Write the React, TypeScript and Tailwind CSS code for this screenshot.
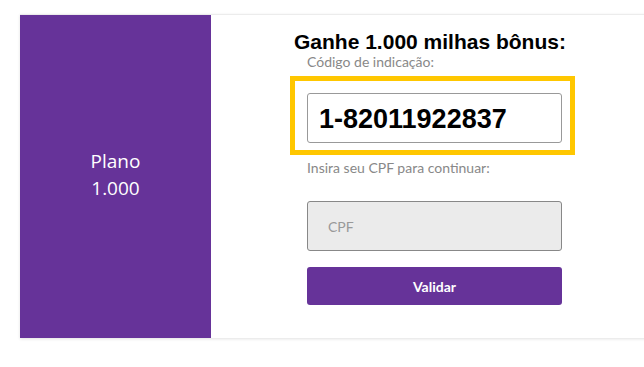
export default function App() {
  return (
    <div className="w-[644px] h-[367px] bg-white overflow-hidden" style={{ fontFamily: "Lato, 'Open Sans', sans-serif" }}>
      <div className="ml-[20px] mt-[14px] w-[640px] h-[324px] flex border-t border-[#ececec] shadow-[0_1px_3px_rgba(0,0,0,0.12)] bg-white">
        <div className="w-[191px] bg-[#663399] flex flex-col items-center justify-center text-white text-[19px] leading-[27px] pb-[3px]" style={{ fontFamily: "'Open Sans', Lato, sans-serif" }}>
          <span>Plano</span>
          <span>1.000</span>
        </div>
        <div className="flex-1 flex flex-col pl-[79px]">
          <div className="mt-[14px] ml-[4px] text-[21px] leading-[26px] font-bold text-black" style={{ fontFamily: "'Liberation Sans', Arial, sans-serif" }}>
            Ganhe 1.000 milhas bônus:
          </div>
          <div className="ml-[17px] -mt-[1px] text-[14px] leading-[16px] text-[#888]">Código de indicação:</div>
          <div className="mt-[6px] w-[285px] h-[79px] border-[5px] border-[#ffc700] flex items-start pt-[12px] pl-[12px]">
            <div className="w-[255px] h-[50px] border border-[#999] rounded-[3px] flex items-center pl-[11px] pt-[2px] text-[27px] font-bold text-black" style={{ fontFamily: "'Liberation Sans', Arial, sans-serif" }}>
              1-82011922837
            </div>
          </div>
          <div className="ml-[17px] mt-[5px] text-[14px] leading-[16px] text-[#888]">Insira seu CPF para continuar:</div>
          <div className="ml-[17px] mt-[25px] w-[255px] h-[50px] bg-[#ebebeb] border border-[#888] rounded-[3px] flex items-center pl-[20px] text-[14px] text-[#999]">
            CPF
          </div>
          <button className="ml-[17px] mt-[16px] w-[255px] h-[38px] bg-[#663399] rounded-[3px] text-white text-[14px] font-bold">
            Validar
          </button>
        </div>
      </div>
    </div>
  );
}
